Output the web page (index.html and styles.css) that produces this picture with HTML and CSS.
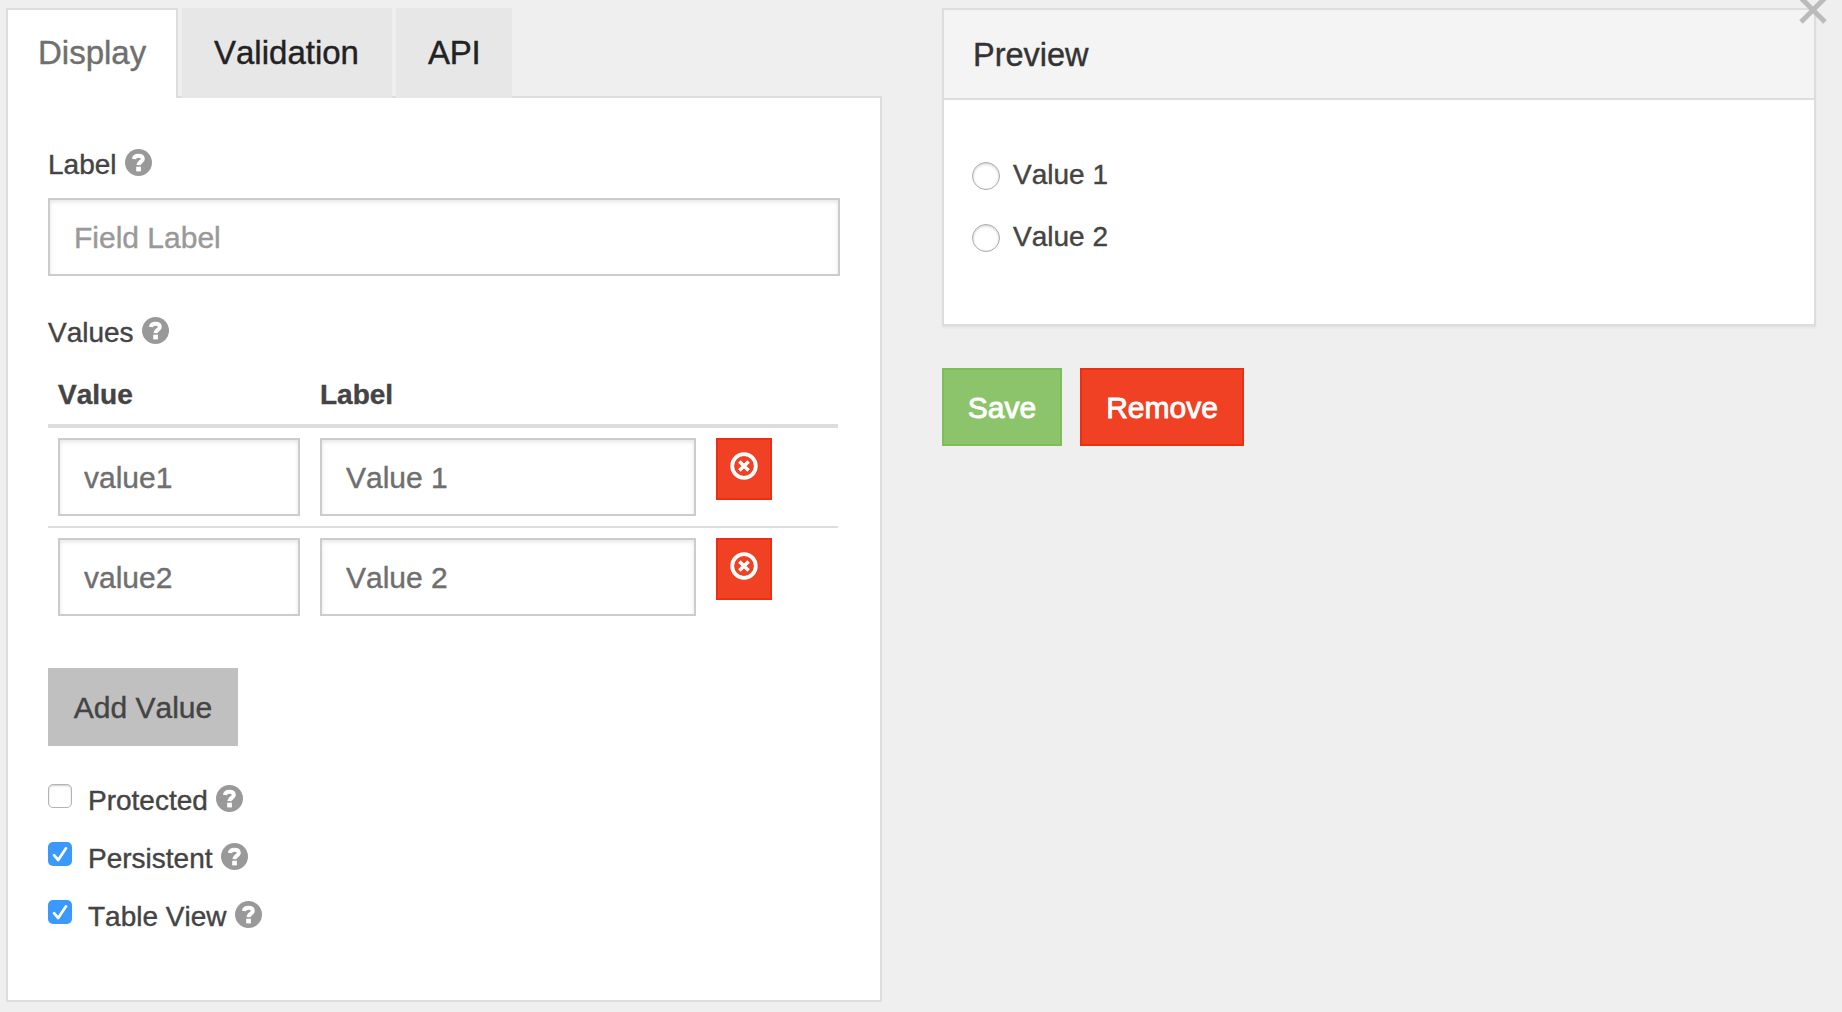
FILE: index.html
```html
<!DOCTYPE html>
<html lang="en">
<head>
<meta charset="utf-8">
<title>Component settings</title>
<link rel="stylesheet" href="styles.css">
</head>
<body>
<svg class="defs" width="0" height="0">
  <symbol id="help" viewBox="0 0 27 27">
    <circle cx="13.5" cy="13.5" r="13.5" fill="#999"/>
    <path d="M8.9 10C9.3 7.4 11 6.8 13.4 6.8c2.7 0 4.4 1.2 4.4 3.2 0 2.9-4.2 2.6-4.4 6.2" fill="none" stroke="#fff" stroke-width="4"/>
    <rect x="11.2" y="17.7" width="4.7" height="4.7" fill="#fff"/>
  </symbol>
  <symbol id="remove" viewBox="0 0 28 28">
    <circle cx="14" cy="14" r="11.8" fill="none" stroke="#fff" stroke-width="3.8"/>
    <path d="M9.4 9.4l9.2 9.2M18.6 9.4l-9.2 9.2" stroke="#fff" stroke-width="3.5"/>
  </symbol>
  <symbol id="tick" viewBox="0 0 24 24">
    <path d="M6 13.2l4.2 4.8L18 6.3" fill="none" stroke="#fff" stroke-width="2.7" stroke-linecap="round" stroke-linejoin="round"/>
  </symbol>
</svg>
<main class="dialog">
  <section class="settings">
    <nav class="tabs">
      <a class="tab tab-active">Display</a>
      <a class="tab tab-wide">Validation</a>
      <a class="tab tab-narrow">API</a>
    </nav>
    <div class="pane">
      <div class="field-label"><span>Label</span><svg class="help"><use href="#help"/></svg></div>
      <input class="input" type="text" placeholder="Field Label">
      <div class="field-label values-label"><span>Values</span><svg class="help"><use href="#help"/></svg></div>
      <div class="table">
        <div class="row head"><span>Value</span><span>Label</span></div>
        <div class="row">
          <input class="input" type="text" value="value1">
          <input class="input" type="text" value="Value 1">
          <button class="btn-icon"><svg><use href="#remove"/></svg></button>
        </div>
        <div class="row">
          <input class="input" type="text" value="value2">
          <input class="input" type="text" value="Value 2">
          <button class="btn-icon"><svg><use href="#remove"/></svg></button>
        </div>
      </div>
      <button class="btn btn-add">Add Value</button>
      <div class="checks">
        <label class="check"><span class="box"></span><span class="check-text">Protected</span><svg class="help"><use href="#help"/></svg></label>
        <label class="check"><span class="box on"><svg><use href="#tick"/></svg></span><span class="check-text">Persistent</span><svg class="help"><use href="#help"/></svg></label>
        <label class="check"><span class="box on"><svg><use href="#tick"/></svg></span><span class="check-text">Table View</span><svg class="help"><use href="#help"/></svg></label>
      </div>
    </div>
  </section>
  <section class="side">
    <div class="preview">
      <h3 class="preview-head">Preview</h3>
      <div class="preview-body">
        <label class="radio"><span class="dot"></span><span class="radio-text">Value 1</span></label>
        <label class="radio"><span class="dot"></span><span class="radio-text">Value 2</span></label>
      </div>
    </div>
    <div class="actions">
      <button class="btn btn-save">Save</button>
      <button class="btn btn-remove">Remove</button>
    </div>
  </section>
</main>
<svg class="close" viewBox="0 0 28 28"><path d="M2 2l24 24M26 2l-24 24" stroke="#bbb" stroke-width="5"/></svg>
</body>
</html>
```
FILE: styles.css
```css
* { box-sizing: border-box; }
body {
  margin: 0;
  height: 1012px;
  overflow: hidden;
  background: #efefef;
  color: #444;
  font-family: "Liberation Sans", Arial, sans-serif;
  font-size: 28px;
  line-height: 40px;
  font-kerning: none;
  -webkit-text-stroke: .4px currentColor;
}
button, input { font: inherit; font-kerning: none; margin: 0; border-radius: 0; }
.defs { display: block; height: 0; }
.dialog {
  display: grid;
  grid-template-columns: 876px 874px;
  column-gap: 60px;
  padding: 8px 0 0 6px;
  align-items: start;
}
.tabs { display: flex; gap: 4px; height: 90px; position: relative; z-index: 1; }
.tab {
  width: 172px;
  padding: 0 32px;
  font-size: 33px;
  line-height: 90px;
  background: #e7e7e7;
  color: #222;
  white-space: nowrap;
}
.tab-active {
  padding: 0 30px;
  line-height: 86px;
  border: 2px solid #ddd;
  border-bottom: 0;
  background: #fff;
  color: #6f6f6f;
}
.tab-wide { width: 210px; }
.tab-narrow { width: 116px; letter-spacing: -.3px; }
.pane {
  height: 906px;
  margin-top: -2px;
  padding: 44px 40px 0;
  border: 2px solid #ddd;
  background: #fff;
}
.field-label { display: flex; height: 56px; line-height: 46px; }
.values-label { margin-top: 34px; height: 58px; }
.help { width: 27px; height: 27px; margin: 6.5px 0 0 8px; }
.input {
  display: block;
  width: 792px;
  height: 78px;
  padding: 2px 24px 0;
  border: 2px solid #ccc;
  background: #fff;
  box-shadow: inset 0 2px 4px rgba(0, 0, 0, .1);
  color: #6f6f6f;
  font-size: 30px;
}
.input::placeholder { color: #999; opacity: 1; }
.table { width: 790px; }
.row {
  display: grid;
  grid-template-columns: 242px 376px 56px;
  column-gap: 20px;
  padding: 10px;
  height: 98px;
}
.row .input { width: 100%; }
.row + .row + .row { border-top: 2px solid #ddd; height: 100px; }
.head { height: 60px; padding: 7px 10px 0; border-bottom: 4px solid #ddd; font-weight: bold; }
.btn-icon {
  display: flex;
  justify-content: center;
  height: 62px;
  padding: 12px 0 0;
  border: 2px solid #eb2f10;
  background: #f04124;
}
.btn-icon svg { width: 28px; height: 28px; }
.btn { height: 78px; padding: 1px 0 0; border: 2px solid; font-size: 30px; }
.btn-add { display: block; width: 190px; margin-top: 42px; border-color: #c0c0c0; background: #c0c0c0; color: #444; }
.checks { margin-top: 38px; }
.check { display: flex; height: 58px; }
.box {
  width: 24px;
  height: 24px;
  margin-right: 16px;
  border: 1px solid #b4b4b4;
  border-radius: 5px;
  box-shadow: inset 0 1px 2px rgba(0, 0, 0, .2);
}
.box.on { border: 0; background: #3b99fc; box-shadow: none; }
.box svg { display: block; width: 24px; height: 24px; }
.check .help { margin-top: .5px; }
.check-text { line-height: 34px; height: 34px; }
.preview {
  height: 318px;
  border: 2px solid #ddd;
  background: #fff;
  box-shadow: 0 2px 2px rgba(0, 0, 0, .05);
}
.preview-head {
  height: 90px;
  margin: 0;
  padding: 0 29px;
  border-bottom: 2px solid #ddd;
  background: #f4f4f4;
  color: #333;
  font-size: 32.5px;
  font-weight: normal;
  line-height: 90px;
}
.preview-body { padding: 62px 28px 0; }
.radio { display: flex; height: 62px; gap: 13px; }
.dot {
  width: 28px;
  height: 28px;
  border: 1px solid #aaa;
  border-radius: 50%;
  box-shadow: inset 0 1px 3px rgba(0, 0, 0, .2);
}
.radio-text { line-height: 26px; height: 26px; }
.actions { display: flex; gap: 18px; margin-top: 42px; }
.btn-save, .btn-remove { color: #fff; -webkit-text-stroke: .9px #fff; }
.btn-save { width: 120px; border-color: #7dbf55; background: #8bc46a; }
.btn-remove { width: 164px; border-color: #eb2f10; background: #f04124; }
.close { position: absolute; left: 1799px; top: -4px; width: 28px; height: 28px; }
```
